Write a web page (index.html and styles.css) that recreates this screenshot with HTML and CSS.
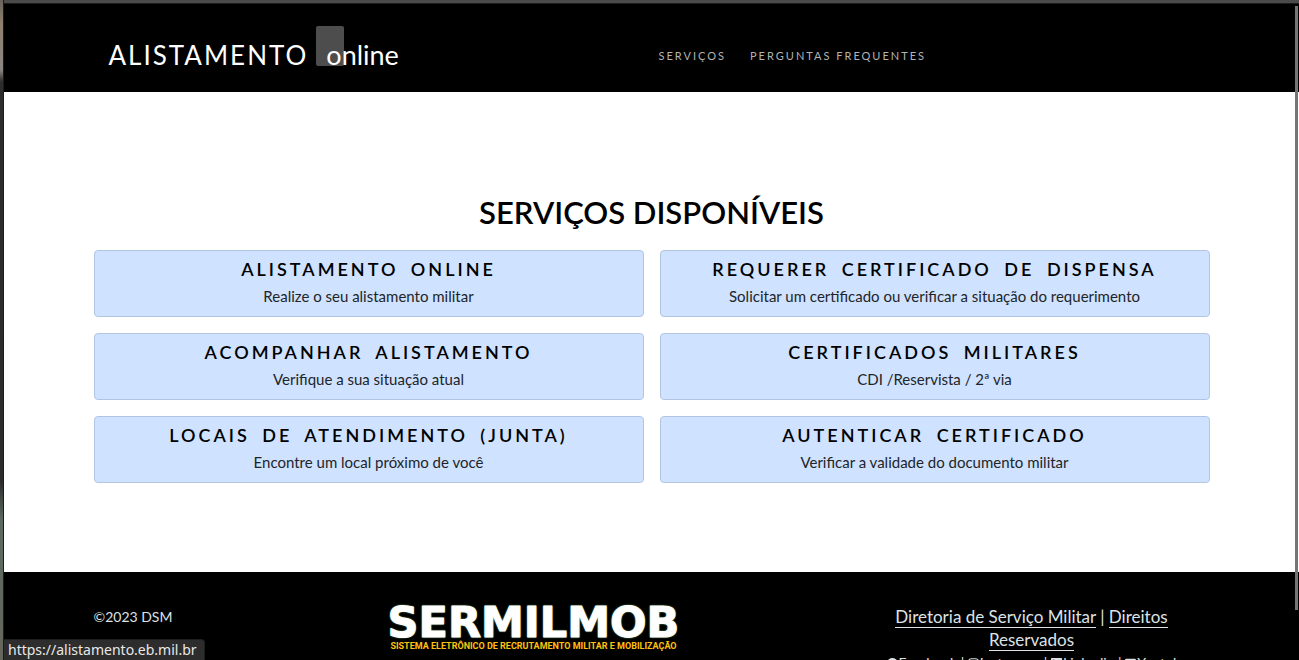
FILE: index.html
```html
<!DOCTYPE html>
<html lang="pt-BR">
<head>
<meta charset="utf-8">
<meta name="viewport" content="width=device-width, initial-scale=1">
<title>Alistamento online</title>
<link rel="stylesheet" href="styles.css">
</head>
<body>
<div class="desktop">
  <div class="page">
    <header class="header">
      <div class="container header-row">
        <a class="brand" href="#"><span class="brand-name">ALISTAMENTO</span><span class="brand-suffix"><span class="brand-mark"></span><span class="brand-word">online</span></span></a>
        <nav class="nav">
          <a href="#servicos">SERVIÇOS</a>
          <a href="#perguntas">PERGUNTAS FREQUENTES</a>
        </nav>
      </div>
    </header>

    <main class="main" id="servicos">
      <div class="container">
        <h1 class="title">SERVIÇOS DISPONÍVEIS</h1>
        <div class="cards">
          <a class="card" href="#"><h2>ALISTAMENTO ONLINE</h2><p>Realize o seu alistamento militar</p></a>
          <a class="card" href="#"><h2>REQUERER CERTIFICADO DE DISPENSA</h2><p>Solicitar um certificado ou verificar a situação do requerimento</p></a>
          <a class="card" href="#"><h2>ACOMPANHAR ALISTAMENTO</h2><p>Verifique a sua situação atual</p></a>
          <a class="card" href="#"><h2>CERTIFICADOS MILITARES</h2><p>CDI /Reservista / 2ª via</p></a>
          <a class="card" href="#"><h2>LOCAIS DE ATENDIMENTO (JUNTA)</h2><p>Encontre um local próximo de você</p></a>
          <a class="card" href="#"><h2>AUTENTICAR CERTIFICADO</h2><p>Verificar a validade do documento militar</p></a>
        </div>
      </div>
    </main>

    <footer class="footer">
      <div class="container footer-row">
        <div class="copyright">©2023 DSM</div>
        <div class="logo">
          <span class="logo-name">SERMILMOB</span>
          <span class="logo-tag">SISTEMA ELETRÔNICO DE RECRUTAMENTO MILITAR E MOBILIZAÇÃO</span>
        </div>
        <div class="links">
          <div><a href="#">Diretoria de Serviço Militar</a> | <a href="#">Direitos Reservados</a></div>
          <div class="social">
            <a href="#"><svg viewBox="0 0 16 16"><path d="M16 8A8 8 0 1 0 6.750 15.900V10.300H4.700V8h2.050V6.200c0-2 1.200-3.150 3-3.150.9 0 1.800.160 1.800.160v2h-1c-1 0-1.300.6-1.300 1.250V8h2.200l-.350 2.300H9.250v5.600A8 8 0 0 0 16 8z"/></svg>Facebook</a> |
            <a href="#"><svg viewBox="0 0 16 16"><g fill="none" stroke="currentColor" stroke-width="1.500"><rect x="1" y="1" width="14" height="14" rx="4"/><circle cx="8" cy="8" r="3.300"/></g><circle cx="12.200" cy="3.800" r="1"/></svg>Instagram</a> |
            <a href="#"><svg viewBox="0 0 16 16"><path fill-rule="evenodd" d="M1 0h14a1 1 0 0 1 1 1v14a1 1 0 0 1-1 1H1a1 1 0 0 1-1-1V1a1 1 0 0 1 1-1zm1.500 6v7.500h2.400V6zm0-3.500v2.300h2.400V2.500zM6.400 6v7.500h2.400V9.500c0-2 2.400-2 2.400 0v4h2.400V9c0-3.500-3.600-4-4.800-2V6z"/></svg>Linkedin</a> |
            <a href="#"><svg viewBox="0 0 16 16"><path fill-rule="evenodd" d="M2 1h12a2 2 0 0 1 2 2v9a2 2 0 0 1-2 2H2a2 2 0 0 1-2-2V3a2 2 0 0 1 2-2zm4.500 3.500v6l4.500-3z"/></svg>Youtube</a>
          </div>
        </div>
      </div>
    </footer>
    <div class="status">https://alistamento.eb.mil.br</div>
    <div class="scroll-thumb"></div>
  </div>
</div>
</body>
</html>
```

FILE: styles.css
```css
* { box-sizing: border-box; }

body {
  margin: 0;
  font-family: Lato, "Open Sans", sans-serif;
  font-size: 16px;
  line-height: 23px;
  color: #212529;
}

a { color: inherit; text-decoration: none; }

.desktop {
  height: 100vh;
  overflow: hidden;
  padding-left: 4px;
  background: linear-gradient(#6b625c 0, #8f806f 24px, #8b8582 70px, #2c2c2b 82px, #2b2b29 480px, #5a6a60 520px, #66675c 100%);
}

.page {
  position: relative;
  height: 100%;
  overflow: hidden;
  display: flex;
  flex-direction: column;
  background: #fff;
  border-top: 3px solid #4b4b4b;
  box-shadow: -1px 0 #1b1b1a;
}

.container {
  width: 100%;
  max-width: 1140px;
  margin: 0 auto;
  padding: 0 12px;
}

.header {
  flex: none;
  background: #000;
  border-top: 1px solid #1c1c1c;
}

.header-row {
  display: grid;
  grid-template-columns: 550px 1fr;
  align-items: center;
  height: 88px;
  padding: 0 27px;
}

.brand {
  display: flex;
  align-items: center;
  color: #fff;
  font-size: 26px;
  line-height: 40px;
  padding-top: 14px;
}

.brand-name { letter-spacing: 2px; }

.brand-suffix {
  position: relative;
  padding-left: 18px;
  font-size: 27px;
}

.brand-mark {
  position: absolute;
  left: 8px;
  top: -9px;
  width: 28px;
  height: 40px;
  border-radius: 2px;
  background: #4d4d4d;
}

.brand-word { position: relative; }

.nav {
  display: flex;
  gap: 24px;
  padding-top: 16px;
  font-size: 11px;
  line-height: 16px;
  letter-spacing: 2px;
  color: #b3b3b3;
}

.main {
  flex: none;
  padding: 100px 0 89px;
}

.title {
  margin: 0 0 18px;
  text-align: center;
  color: #000;
  font-size: 31px;
  line-height: 40px;
  font-weight: 600;
}

.cards {
  display: grid;
  grid-template-columns: 1fr 1fr;
  gap: 16px;
}

.card {
  display: block;
  padding: 7px 8px 9px;
  border: 1px solid #b1c5e3;
  border-radius: 4px;
  background: #cfe2ff;
  text-align: center;
}

.card h2 {
  margin: 0 0 6px;
  color: #000;
  font-size: 18px;
  line-height: 22px;
  font-weight: 600;
  letter-spacing: 3px;
  word-spacing: 5px;
}

.card p {
  margin: 0;
  font-size: 15px;
  line-height: 21px;
}

.footer {
  flex: 1;
  padding-top: 33px;
  background: #000;
  color: #dee2e6;
}

.footer-row {
  display: grid;
  grid-template-columns: 292px 296px 1fr;
}

.copyright { font-size: 14px; }

.logo {
  display: flex;
  flex-direction: column;
  align-items: center;
  white-space: nowrap;
}

.logo-name {
  color: #fff;
  font: bold 43px/35px "DejaVu Sans", sans-serif;
  -webkit-text-stroke: 1px #fff;
  text-shadow: 0 0 2px #5f9a5c, 0 0 2px #5f9a5c;
}

.logo-tag {
  color: #ffc20e;
  font: bold 9px/12px Roboto, "Liberation Sans", sans-serif;
}

.links {
  width: 290px;
  margin-left: 205px;
  text-align: center;
  font-size: 17px;
}

.links a { border-bottom: 1px solid; }

.links .social {
  white-space: nowrap;
  font-size: 14px;
}

.links .social a { border-bottom: 0; }

.social svg {
  width: 11px;
  height: 11px;
  margin-right: 1px;
  vertical-align: -1px;
  fill: currentColor;
}

.status {
  position: absolute;
  left: 0;
  bottom: 0;
  padding: 0 7px 0 4px;
  border: 1px solid #1f1f1f;
  border-width: 1px 1px 0 0;
  border-top-right-radius: 4px;
  background: #2d2d2d;
  color: #e8e8e8;
  font: 14px/20px "Noto Sans", sans-serif;
}

.scroll-thumb {
  position: absolute;
  right: 1px;
  top: 3px;
  width: 3px;
  height: 92%;
  background: #757575;
}
```
